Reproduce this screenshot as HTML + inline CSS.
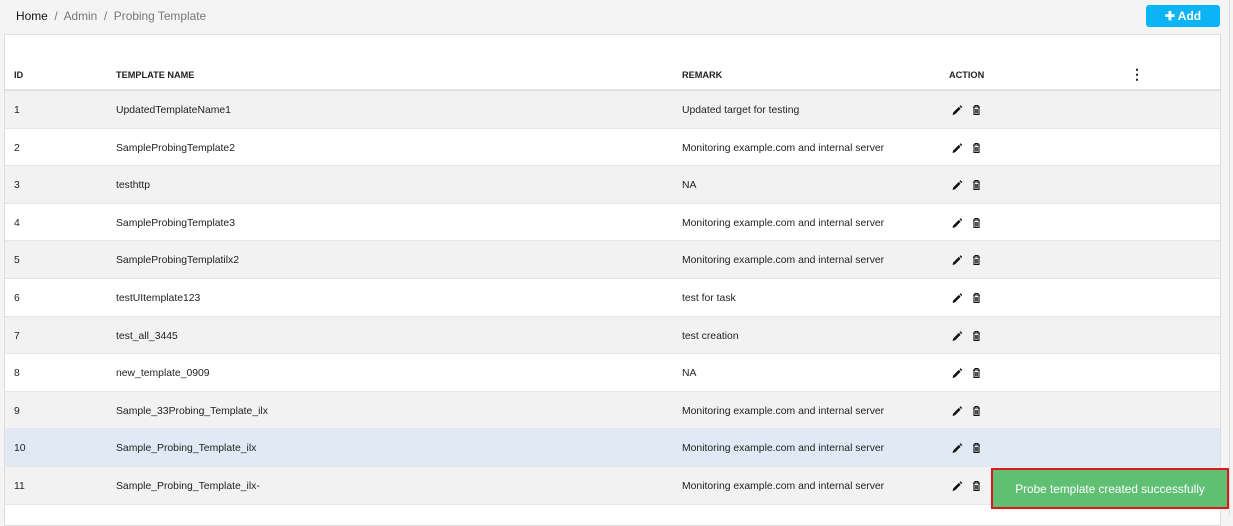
<!DOCTYPE html>
<html><head><style>
body{margin:0;width:1233px;height:515px;overflow:hidden;background:#f4f4f4;font-family:"Liberation Sans",sans-serif;font-size:10.4px;color:#222;position:relative}
.bc{position:absolute;left:16px;top:9px;font-size:11.9px;color:#777}
.bc b{font-weight:normal;color:#111}
.add{position:absolute;left:1146px;top:5px;width:74px;height:22px;background:#0bb4f5;border-radius:3px;color:#fff;font-size:12px;font-weight:bold;text-align:center;line-height:22px}
.card{position:absolute;left:4px;top:34px;width:1215px;height:490px;background:#fff;border:1px solid #ddd}
.sb{position:absolute;left:1229px;top:0;width:1px;height:515px;background:#ddd}
.hd{position:absolute;top:35px;left:5px;width:1215px;height:56px;border-bottom:2px solid #e2e2e2;box-sizing:border-box;font-size:9.2px;font-weight:bold}
.hd span,.r span{position:absolute}
.r{position:absolute;left:5px;width:1215px;height:37.6px;border-bottom:1px solid #e6e6e6;box-sizing:border-box}
.r span{top:14px}
.ic{position:absolute;top:13px;left:946px}
.toast{position:absolute;left:991px;top:468px;width:234px;height:37px;border:2px solid #e0161d;background:#5fbf73;color:#fff;font-size:11.8px;text-align:center;line-height:38px}
</style></head><body>
<div class="bc"><b>Home</b> &nbsp;/&nbsp; Admin &nbsp;/&nbsp; Probing Template</div>
<div class="add">✚ Add</div>
<div class="card"></div>
<div class="sb"></div>
<div class="hd"><span style="left:9px;top:35px">ID</span><span style="left:111px;top:35px">TEMPLATE NAME</span><span style="left:677px;top:35px">REMARK</span><span style="left:944px;top:35px">ACTION</span><span style="left:1125px;top:31px;font-size:14px">⋮</span></div>
<div id="rows"></div>
<script>
var d=[["1","UpdatedTemplateName1","Updated target for testing"],["2","SampleProbingTemplate2","Monitoring example.com and internal server"],["3","testhttp","NA"],["4","SampleProbingTemplate3","Monitoring example.com and internal server"],["5","SampleProbingTemplatilx2","Monitoring example.com and internal server"],["6","testUItemplate123","test for task"],["7","test_all_3445","test creation"],["8","new_template_0909","NA"],["9","Sample_33Probing_Template_ilx","Monitoring example.com and internal server"],["10","Sample_Probing_Template_ilx","Monitoring example.com and internal server"],["11","Sample_Probing_Template_ilx-","Monitoring example.com and internal server"]];
var ic='<svg class="ic" width="30" height="12" viewBox="0 0 30 12"><path d="M1.5 11l.8-2.6 5.5-5.5 1.8 1.8-5.5 5.5z M8.5 2.2l1-1 1.8 1.8-1 1z" fill="#111"/><g fill="none" stroke="#111" stroke-width="1.1"><path d="M22 3h7M24 3V1.5h3V3M23 3.5v7h5v-7M24.8 5v4.5M26.2 5v4.5"/></g></svg>';
var h='';d.forEach(function(r,i){var bg=i==9?'#e1eaf4':(i%2==0?'#f2f2f2':'#fff');h+='<div class="r" style="top:'+(91+i*37.6)+'px;background:'+bg+'"><span style="left:9px">'+r[0]+'</span><span style="left:111px">'+r[1]+'</span><span style="left:677px">'+r[2]+'</span>'+ic+'</div>'});
document.getElementById('rows').innerHTML=h;
</script>
<div class="toast">Probe template created successfully</div>
</body></html>
